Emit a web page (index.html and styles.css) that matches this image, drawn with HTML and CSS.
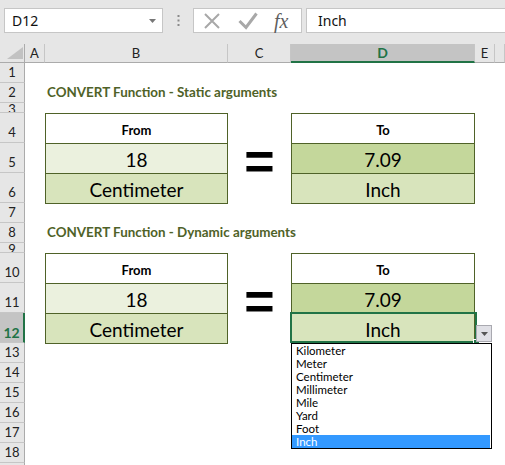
FILE: index.html
```html
<!DOCTYPE html>
<html>
<head>
  <title>CONVERT Function</title>
  <link rel="stylesheet" href="styles.css">
</head>
<body>
  <div class="toolbar">
    <div class="name-box">
      <span>D12</span>
      <svg width="7" height="4" viewBox="0 0 7 4"><path d="M0 0h7L3.5 4z" fill="#777"/></svg>
    </div>
    <div class="grip">
      <svg width="3" height="11" viewBox="0 0 3 11">
        <rect x="0.5" y="0" width="2" height="2" fill="#8a8a8a"/>
        <rect x="0.5" y="4.5" width="2" height="2" fill="#8a8a8a"/>
        <rect x="0.5" y="9" width="2" height="2" fill="#8a8a8a"/>
      </svg>
    </div>
    <div class="fx-buttons">
      <svg class="cancel" width="18" height="16" viewBox="0 0 18 16">
        <path d="M2 1L16 15M16 1L2 15" stroke="#a8a8a8" stroke-width="2" fill="none"/>
      </svg>
      <svg class="enter" width="20" height="18" viewBox="0 0 20 18">
        <path d="M1.5 9L8 15.5L18.5 1.5" stroke="#a8a8a8" stroke-width="3" fill="none"/>
      </svg>
      <span class="fx">fx</span>
    </div>
    <div class="formula">Inch</div>
  </div>

  <div class="sheet">
    <div class="corner">
      <svg width="16" height="12" viewBox="0 0 16 12"><path d="M16 0V12H0z" fill="#c2c2c2"/></svg>
    </div>
    <div class="col-head">A</div>
    <div class="col-head">B</div>
    <div class="col-head">C</div>
    <div class="col-head active">D</div>
    <div class="col-head">E</div>
    <div class="col-head"></div>

    <div class="row-head">1</div>
    <div class="row-head">2</div>
    <div class="row-head short">3</div>
    <div class="row-head">4</div>
    <div class="row-head">5</div>
    <div class="row-head">6</div>
    <div class="row-head">7</div>
    <div class="row-head">8</div>
    <div class="row-head short">9</div>
    <div class="row-head">10</div>
    <div class="row-head">11</div>
    <div class="row-head active">12</div>
    <div class="row-head">13</div>
    <div class="row-head">14</div>
    <div class="row-head">15</div>
    <div class="row-head">16</div>
    <div class="row-head">17</div>
    <div class="row-head">18</div>
    <div class="row-head"></div>

    <div class="title static">CONVERT Function - Static arguments</div>

    <div class="box from static">
      <div class="cell head">From</div>
      <div class="cell value">18</div>
      <div class="cell unit">Centimeter</div>
    </div>
    <div class="equals static">=</div>
    <div class="box to static">
      <div class="cell head">To</div>
      <div class="cell value">7.09</div>
      <div class="cell unit">Inch</div>
    </div>

    <div class="title dynamic">CONVERT Function - Dynamic arguments</div>

    <div class="box from dynamic">
      <div class="cell head">From</div>
      <div class="cell value">18</div>
      <div class="cell unit">Centimeter</div>
    </div>
    <div class="equals dynamic">=</div>
    <div class="box to dynamic">
      <div class="cell head">To</div>
      <div class="cell value">7.09</div>
      <div class="cell unit selected">
        Inch
        <div class="selection"><div class="handle"></div></div>
        <div class="drop-button">
          <svg width="7" height="4" viewBox="0 0 7 4"><path d="M0 0h7L3.5 4z" fill="#555"/></svg>
        </div>
        <div class="drop-list">
          <div class="item">Kilometer</div>
          <div class="item">Meter</div>
          <div class="item">Centimeter</div>
          <div class="item">Millimeter</div>
          <div class="item">Mile</div>
          <div class="item">Yard</div>
          <div class="item">Foot</div>
          <div class="item picked">Inch</div>
        </div>
      </div>
    </div>
  </div>
</body>
</html>
```

FILE: styles.css
```css
body {
  margin: 0;
  width: 505px;
  height: 465px;
  overflow: hidden;
  background-color: #e6e6e6;
  font-family: Lato, "Noto Sans", sans-serif;
}

/* formula bar */
.toolbar {
  height: 44px;
  box-sizing: border-box;
  padding: 8px 0 0 4px;
  display: flex;
  align-items: flex-start;
}
.name-box {
  width: 159px;
  height: 25px;
  box-sizing: border-box;
  background-color: #fff;
  border: 1px solid #c6c6c6;
  display: flex;
  align-items: center;
  justify-content: space-between;
  padding: 0 6px 0 7px;
  font: 14px "Noto Sans", sans-serif;
  color: #111;
}
.grip {
  width: 30px;
  height: 25px;
  display: flex;
  align-items: center;
  justify-content: center;
}
.fx-buttons {
  width: 109px;
  height: 25px;
  box-sizing: border-box;
  background-color: #fff;
  border: 1px solid #c6c6c6;
  display: flex;
  align-items: center;
  padding-left: 9px;
}
.fx-buttons .enter {
  margin-left: 17px;
}
.fx {
  margin-left: 16px;
  font: italic 20px "Liberation Serif", serif;
  color: #5f5f5f;
  line-height: 20px;
}
.formula {
  flex: 1;
  height: 25px;
  margin-left: 4px;
  margin-right: -2px;
  box-sizing: border-box;
  background-color: #fff;
  border: 1px solid #c6c6c6;
  display: flex;
  align-items: center;
  padding-left: 11px;
  font: 14px "Noto Sans", sans-serif;
  color: #111;
}

/* grid */
.sheet {
  height: 421px;
  background-color: #fff;
  display: grid;
  grid-template-columns: 25px 20px 183px 63px 184px 20px 1fr;
  grid-template-rows: 19px 20px 20px 10px 30px 30px 30px 20px 20px 10px 30px 30px 30px 20px 20px 20px 20px 20px 20px 1fr;
}
.corner,
.col-head {
  grid-row: 1;
  box-sizing: border-box;
  background-color: #e6e6e6;
  border-right: 1px solid #c6c6c6;
  border-bottom: 1px solid #ababab;
}
.corner {
  display: flex;
  align-items: flex-end;
  justify-content: flex-end;
  padding: 0 1px 3px 0;
  border-right-color: #ababab;
}
.col-head {
  display: flex;
  align-items: center;
  justify-content: center;
  font-size: 13px;
  color: #222;
}
.col-head.active {
  background-color: #c4c4c4;
  color: #217346;
  font-weight: bold;
  font-size: 14px;
  border-bottom: 2px solid #217346;
}
.row-head {
  grid-column: 1;
  box-sizing: border-box;
  background-color: #e6e6e6;
  border-right: 1px solid #ababab;
  border-bottom: 1px solid #c6c6c6;
  overflow: hidden;
  display: flex;
  align-items: flex-end;
  justify-content: center;
  padding-bottom: 3px;
  font-size: 13px;
  line-height: 13px;
  color: #222;
}
.row-head.short {
  line-height: 6px;
  padding-bottom: 0;
}
.row-head.active {
  background-color: #c4c4c4;
  color: #217346;
  font-weight: bold;
  font-size: 14px;
  border-right: 2px solid #217346;
}

/* content */
.title {
  grid-column: 3 / 7;
  display: flex;
  align-items: flex-end;
  padding: 0 0 3px 2px;
  white-space: nowrap;
  font-size: 13.4px;
  font-weight: bold;
  color: #4f6228;
}
.title.static { grid-row: 3; }
.title.dynamic { grid-row: 9; }

.box {
  align-self: start;
  height: 91px;
  box-sizing: border-box;
  border: 1px solid #4f6228;
  border-bottom: none;
  display: flex;
  flex-direction: column;
}
.box.from { grid-column: 3; }
.box.to { grid-column: 5; }
.box.static { grid-row: 5 / 8; }
.box.dynamic { grid-row: 11 / 14; }

.cell {
  height: 30px;
  box-sizing: border-box;
  border-bottom: 1px solid #4f6228;
  display: flex;
  align-items: center;
  justify-content: center;
  padding-top: 2px;
  font-size: 19px;
  color: #000;
}
.cell.head {
  background-color: #fff;
  font-size: 13px;
  font-weight: bold;
  padding-top: 3px;
}
.from .value { background-color: #ebf1de; }
.to .value { background-color: #c4d79b; }
.cell.unit { background-color: #d8e4bc; }

.equals {
  grid-column: 4;
  display: flex;
  justify-content: center;
  align-items: flex-start;
  font: bold 52px "Liberation Sans", sans-serif;
  line-height: 36px;
  color: #000;
}
.equals.static { grid-row: 6 / 8; }
.equals.dynamic { grid-row: 12 / 14; }

/* selection and validation list */
.selected {
  position: relative;
}
.selection {
  position: absolute;
  left: -2px;
  top: -2px;
  right: -3px;
  bottom: 0;
  border: 2px solid #217346;
}
.handle {
  position: absolute;
  right: -4px;
  bottom: -4px;
  width: 5px;
  height: 5px;
  background-color: #217346;
  border-left: 1px solid #fff;
  border-top: 1px solid #fff;
}
.drop-button {
  position: absolute;
  left: 184px;
  top: 11px;
  width: 16px;
  height: 17px;
  box-sizing: border-box;
  background-color: #e0e0e6;
  border: 1px solid #a9a9b0;
  display: flex;
  align-items: center;
  justify-content: center;
}
.drop-list {
  position: absolute;
  left: -1px;
  top: 29px;
  width: 201px;
  box-sizing: border-box;
  background-color: #fff;
  border: 1px solid #000;
  z-index: 2;
}
.item {
  height: 13px;
  line-height: 13px;
  padding-left: 4px;
  margin-right: 1px;
  font-size: 11.5px;
  color: #000;
}
.item.picked {
  background-color: #3399ff;
  color: #fff;
}
```
